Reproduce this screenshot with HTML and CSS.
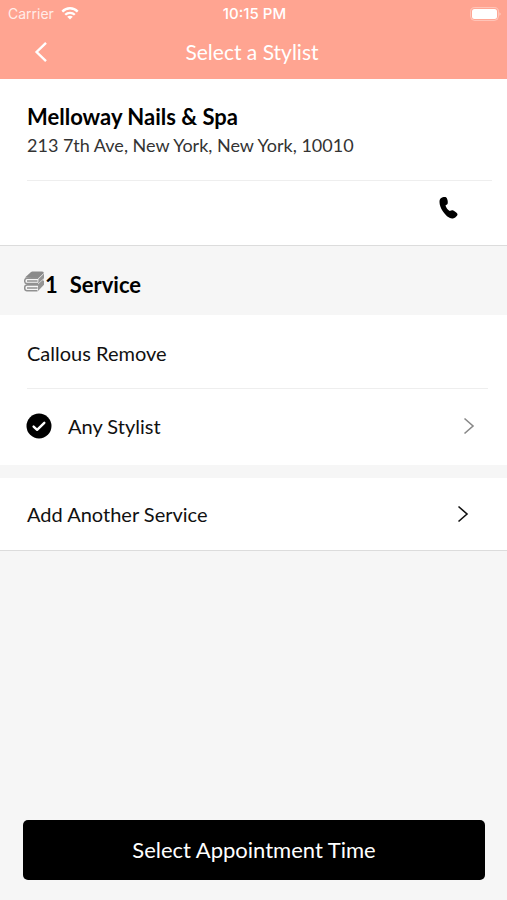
FILE: index.html
```html
<!DOCTYPE html>
<html lang="en">
<head>
<meta charset="utf-8">
<meta name="viewport" content="width=device-width, initial-scale=1">
<title>Select a Stylist</title>
<link rel="stylesheet" href="styles.css">
</head>
<body>
<header class="top">
  <div class="status">
    <div class="carrier">
      <span>Carrier</span>
      <svg width="18" height="14" viewBox="0 0 18 14" fill="none" stroke="currentColor" stroke-width="2.3" aria-hidden="true">
        <path d="M1.3 4.600C5.600.1 12.400.1 16.700 4.600"/>
        <path d="M4.200 7.800c2.700-2.700 6.900-2.700 9.600 0"/>
        <path d="M9 12.600 6.200 9.800c1.500-1.400 4.100-1.400 5.600 0z" fill="currentColor" stroke="none"/>
      </svg>
    </div>
    <time class="clock">10:15 PM</time>
    <svg class="battery" width="31" height="14" viewBox="0 0 31 14" aria-hidden="true">
      <rect x=".6" y=".6" width="27.800" height="12.800" rx="4" fill="none" stroke="#fff" stroke-opacity=".4"/>
      <rect x="2" y="2" width="25" height="10" rx="2.500" fill="#fff"/>
      <path d="M29.500 5.200c1.400.8 1.400 2.800 0 3.600z" fill="#fff" fill-opacity=".5"/>
    </svg>
  </div>
  <nav class="nav">
    <button class="back" type="button" aria-label="Back">
      <svg width="14" height="22" viewBox="0 0 14 22" fill="none" stroke="currentColor" stroke-width="2.400" aria-hidden="true"><path d="M12 1.800 2.600 11l9.400 9.200"/></svg>
    </button>
    <h1 class="title">Select a Stylist</h1>
  </nav>
</header>
<main class="content">
  <section class="salon">
    <div class="salon-info">
      <h2 class="salon-name">Melloway Nails &amp; Spa</h2>
      <p class="address">213 7th Ave, New York, New York, 10010</p>
    </div>
    <div class="salon-actions">
      <button class="call" type="button" aria-label="Call salon">
        <svg width="20" height="24" viewBox="0 0 20 24" aria-hidden="true"><path d="M1.800 2.200C3.300 1.200 5.800.8 7 1.300c1.300.8 2.200 4.700 1.700 6.200-.4 1.100-1.600 1.400-2.200 2 .5 2.100 2.300 4.500 4.300 5.600 1-.6 2.300-1.200 3.400-.7 1.600.6 4.300 2.500 4.300 3.900 0 1.700-2.800 4.300-5.300 4.300-3.600-.3-7-3.700-9.400-7.300C1.700 12 .5 9 .5 6c0-1.700.4-3 1.300-3.800z"/></svg>
      </button>
    </div>
  </section>
  <h2 class="services-head">
    <svg class="stack" width="21" height="21" viewBox="0 0 21 21" aria-hidden="true">
      <path d="M1 6.500 7 1q.6-.5 1.300-.5H18q2.200 0 1.600 2L14.500 7.500z" fill="#8a8a8a"/>
      <path d="M14.500 8 20 2.600v5L18.600 9.200 20 9.700v4L14 20V14z" fill="#949494"/>
      <g fill="none" stroke="#919191" stroke-width="1.500">
        <path d="M14 7.300H3q-2.300 0-2.300 2.600T3 12.500h11M3 9.900h10.500M14 14H3q-2.300 0-2.300 2.900T3 19.800h10.500M3 16.900h10.500"/>
      </g>
      <path d="m14 7.800 5.800-5.400M14 13l5.800-5.300" fill="none" stroke="#ddd" stroke-width=".8"/>
    </svg>
    <span class="count">1</span>
    <span>Service</span>
  </h2>
  <section class="service">
    <p class="service-name">Callous Remove</p>
    <button class="stylist" type="button">
      <svg width="26" height="26" viewBox="0 0 26 26" aria-hidden="true"><circle cx="13" cy="13" r="12.500"/><path d="m7.600 13.600 3.500 3.200 7.200-7" fill="none" stroke="#fff" stroke-width="2.400" stroke-linecap="round" stroke-linejoin="round"/></svg>
      <span class="label">Any Stylist</span>
      <svg class="chevron-light" width="12" height="18" viewBox="0 0 12 18" fill="none" stroke="currentColor" stroke-width="1.600" aria-hidden="true"><path d="m1.500 1.500 8.500 7.500-8.500 7.500"/></svg>
    </button>
  </section>
  <button class="add" type="button">
    <span class="label">Add Another Service</span>
    <svg width="12" height="18" viewBox="0 0 12 18" fill="none" stroke="currentColor" stroke-width="1.600" aria-hidden="true"><path d="m1.500 1.500 8.500 7.500-8.500 7.500"/></svg>
  </button>
</main>
<footer class="footer">
  <button class="submit" type="button">Select Appointment Time</button>
</footer>
</body>
</html>
```
FILE: styles.css
```css
* {
  box-sizing: border-box;
}

body {
  margin: 0;
  min-height: 100vh;
  display: flex;
  flex-direction: column;
  background: #f6f6f6;
  color: #111;
  font-family: Lato, sans-serif;
  font-size: 20px;
  line-height: 28px;
}

h1, h2, p {
  margin: 0;
}

button {
  border: 0;
  padding: 0;
  background: none;
  color: inherit;
  font: inherit;
  text-align: left;
  cursor: pointer;
}

svg {
  display: block;
  flex: none;
}

.top {
  background: #ffa491;
  color: #fff;
}

.status {
  display: grid;
  grid-template-columns: 1fr auto 1fr;
  align-items: center;
  height: 27px;
  padding: 0 6px 0 8px;
  font-family: Inter, sans-serif;
  font-size: 14px;
}

.carrier {
  display: flex;
  align-items: center;
  gap: 7px;
}

.carrier span {
  opacity: 0.8;
}

.clock {
  font-size: 15px;
  font-weight: 500;
}

.battery {
  justify-self: end;
}

.nav {
  display: grid;
  grid-template-columns: 48px 1fr 51px;
  align-items: center;
  height: 52px;
  padding-bottom: 2px;
}

.back {
  display: flex;
  justify-content: flex-end;
  align-items: center;
  height: 44px;
}

.title {
  font-size: 21px;
  font-weight: 400;
  text-align: center;
}

.salon {
  background: #fff;
  border-bottom: 1px solid #dcdcdc;
}

.salon-info {
  margin: 0 15px 0 27px;
  padding: 24px 0 21px;
  border-bottom: 1px solid #eee;
}

.salon-name {
  color: #000;
  font-size: 22px;
  font-weight: 700;
}

.address {
  font-size: 18px;
  color: #333;
}

.salon-actions {
  display: flex;
  justify-content: flex-end;
  padding: 15px 48px 25px 27px;
}

.services-head {
  display: flex;
  align-items: center;
  padding: 25px 24px 16px;
  color: #000;
  font-size: 22px;
  font-weight: 700;
}

.stack {
  align-self: flex-start;
}

.count {
  margin-right: 12px;
}

.service {
  background: #fff;
}

.service-name {
  margin: 0 19px 0 27px;
  padding: 24px 0 21px;
  border-bottom: 1px solid #eee;
}

.stylist,
.add {
  display: flex;
  align-items: center;
  width: 100%;
}

.stylist {
  gap: 16px;
  padding: 23px 32px 25px 26px;
}

.label {
  flex: 1;
}

.chevron-light {
  color: #888;
}

.add {
  margin-top: 13px;
  padding: 22px 38px 22px 27px;
  background: #fff;
  border-bottom: 1px solid #dcdcdc;
}

.footer {
  margin-top: auto;
  padding: 20px 22px 20px 23px;
}

.submit {
  width: 100%;
  padding: 16px;
  border-radius: 5px;
  background: #000;
  color: #fff;
  font-size: 22px;
  text-align: center;
}
```
